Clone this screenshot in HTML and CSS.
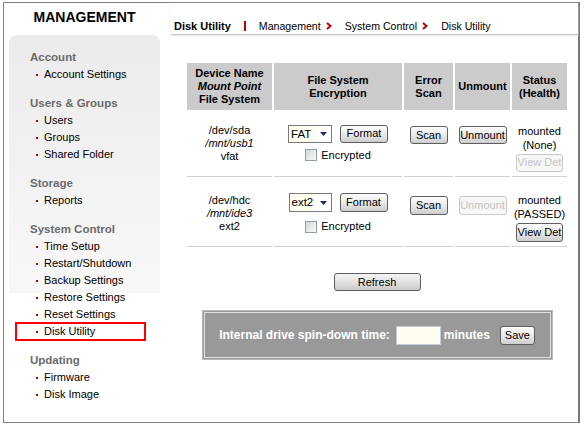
FILE: index.html
```html
<!DOCTYPE html>
<html>
<head>
<meta charset="utf-8">
<title>Disk Utility</title>
<link rel="stylesheet" href="styles.css">
</head>
<body>
<div class="frame">
  <aside class="sidebar">
    <h1 class="brand">MANAGEMENT</h1>
    <nav class="menu">
      <div class="group">
        <h2>Account</h2>
        <ul><li>Account Settings</li></ul>
      </div>
      <div class="group">
        <h2>Users &amp; Groups</h2>
        <ul><li>Users</li><li>Groups</li><li>Shared Folder</li></ul>
      </div>
      <div class="group">
        <h2>Storage</h2>
        <ul><li>Reports</li></ul>
      </div>
      <div class="group">
        <h2>System Control</h2>
        <ul>
          <li>Time Setup</li>
          <li>Restart/Shutdown</li>
          <li>Backup Settings</li>
          <li>Restore Settings</li>
          <li>Reset Settings</li>
          <li class="active">Disk Utility</li>
        </ul>
      </div>
      <div class="group">
        <h2>Updating</h2>
        <ul><li>Firmware</li><li>Disk Image</li></ul>
      </div>
    </nav>
  </aside>

  <main class="content">
    <div class="crumbs">
      <span class="page-title">Disk Utility</span>
      <span class="crumb-bar"></span>
      <span class="crumb">Management</span>
      <svg class="chev" width="6" height="8" viewBox="0 0 6 8"><polyline points="1,1 4.5,4 1,7" fill="none" stroke="#c00000" stroke-width="2"/></svg>
      <span class="crumb">System Control</span>
      <svg class="chev" width="6" height="8" viewBox="0 0 6 8"><polyline points="1,1 4.5,4 1,7" fill="none" stroke="#c00000" stroke-width="2"/></svg>
      <span class="crumb">Disk Utility</span>
    </div>

    <div class="body">
      <table class="disks">
        <colgroup>
          <col class="c-dev"><col class="c-fs"><col class="c-scan"><col class="c-unm"><col class="c-stat">
        </colgroup>
        <thead>
          <tr>
            <th>Device Name<br><em>Mount Point</em><br>File System</th>
            <th>File System<br>Encryption</th>
            <th>Error<br>Scan</th>
            <th>Unmount</th>
            <th>Status<br>(Health)</th>
          </tr>
        </thead>
        <tbody>
          <tr class="r1">
            <td class="dev">/dev/sda<br><em>/mnt/usb1</em><br>vfat</td>
            <td>
              <div class="fs-line">
                <span class="select"><span class="select-val">FAT</span><svg class="arrow" width="7" height="4" viewBox="0 0 7 4"><polygon points="0,0 7,0 3.5,4" fill="#1c2a6b"/></svg></span>
                <button class="btn w-format">Format</button>
              </div>
              <label class="enc-line"><span class="check"></span>Encrypted</label>
            </td>
            <td class="act"><button class="btn w-scan">Scan</button></td>
            <td class="act"><button class="btn w-unm">Unmount</button></td>
            <td class="stat">mounted<br>(None)<br><button class="btn w-view" disabled>View Det</button></td>
          </tr>
          <tr class="r2">
            <td class="dev">/dev/hdc<br><em>/mnt/ide3</em><br>ext2</td>
            <td>
              <div class="fs-line">
                <span class="select"><span class="select-val">ext2</span><svg class="arrow" width="7" height="4" viewBox="0 0 7 4"><polygon points="0,0 7,0 3.5,4" fill="#1c2a6b"/></svg></span>
                <button class="btn w-format">Format</button>
              </div>
              <label class="enc-line"><span class="check"></span>Encrypted</label>
            </td>
            <td class="act"><button class="btn w-scan">Scan</button></td>
            <td class="act"><button class="btn w-unm" disabled>Unmount</button></td>
            <td class="stat">mounted<br>(PASSED)<br><button class="btn w-view">View Det</button></td>
          </tr>
        </tbody>
      </table>

      <button class="btn refresh">Refresh</button>

      <div class="spin">
        <span class="spin-label">Internal drive spin-down time:</span>
        <span class="spin-input"></span>
        <span class="spin-unit">minutes</span>
        <button class="btn save">Save</button>
      </div>
    </div>
  </main>
</div>
</body>
</html>
```

FILE: styles.css
```css
* { box-sizing: border-box; }

body {
  margin: 0;
  background: #fff;
  color: #000;
  font-family: "Liberation Sans", Arial, sans-serif;
  font-size: 11px;
}

.frame {
  margin: 2px 0 0 3px;
  width: 577px;
  height: 421px;
  border: 1px solid #808080;
  border-right: 2px solid #777;
  display: flex;
}

/* ---------- sidebar ---------- */
.sidebar {
  width: 167px;
  flex: none;
}

.brand {
  margin: 0;
  height: 32px;
  padding: 5px 6px 0 0;
  font-size: 14px;
  line-height: 18px;
  font-weight: bold;
  text-align: center;
}

.menu {
  margin-left: 5px;
  width: 151px;
  height: 385px;
  padding-top: 14px;
  border-radius: 8px 8px 0 0;
  background: linear-gradient(#ebebeb, #f8f8f8) no-repeat;
  background-size: 100% 258px;
}

.group + .group { margin-top: 12px; }

.group h2 {
  margin: 0;
  padding-left: 21px;
  font-size: 11.5px;
  line-height: 17px;
  font-weight: bold;
  color: #6b6b6b;
}

.group ul {
  margin: 0;
  padding: 0;
  list-style: none;
}

.group li {
  display: flex;
  align-items: center;
  margin-left: 7px;
  width: 129px;
  height: 17px;
  line-height: 17px;
}

.group li::before {
  content: "";
  width: 2px;
  height: 2px;
  margin: 0 6px 0 20px;
  background: #c00000;
}

.group li.active {
  outline: 2px solid #ff0000;
  outline-offset: -1px;
}

/* ---------- main ---------- */
.content {
  flex: 1;
  min-width: 0;
}

.crumbs {
  height: 32px;
  padding: 14px 0 0 3px;
  display: flex;
  align-items: center;
  border-bottom: 1px solid #c6c6c6;
  box-shadow: 0 1px 2px #e6e6e6;
  line-height: 14px;
}

.page-title {
  font-size: 11px;
  font-weight: bold;
}

.crumb-bar {
  width: 2px;
  height: 10px;
  margin: 0 13px 0 13px;
  background: #c00000;
}

.crumb { font-size: 10.6px; }

.chev { margin: 0 13px 0 5px; }

.body {
  padding-left: 5px;
  display: flex;
  flex-direction: column;
  align-items: center;
}

/* ---------- table ---------- */
.disks {
  margin-top: 28px;
  width: 384px;
  table-layout: fixed;
  border-collapse: separate;
  border-spacing: 2px 0;
}

.c-dev { width: 85px; }
.c-fs { width: 128px; }
.c-scan { width: 49px; }
.c-unm { width: 55px; }
.c-stat { width: 55px; }

.disks th {
  background: #cbcbcb;
  padding: 4px 0;
  height: 47px;
  font-size: 11px;
  line-height: 13px;
  font-weight: bold;
  text-align: center;
  vertical-align: middle;
}

.disks td {
  padding: 0;
  border-bottom: 1px solid #d2d2d2;
  text-align: center;
  vertical-align: middle;
  line-height: 13px;
}

.r1 td { height: 67px; }
.r2 td { height: 70px; padding-top: 3px; }

.disks td.act { padding-bottom: 16px; }
.disks .r2 td.act { padding-bottom: 13px; padding-top: 0; }

.disks td.stat {
  padding-top: 9px;
  line-height: 14px;
}

.disks .r2 td.stat { padding-top: 11px; }

.fs-line {
  display: flex;
  justify-content: center;
  align-items: center;
  gap: 8px;
}

.select {
  display: inline-flex;
  align-items: stretch;
  width: 44px;
  height: 18px;
  border: 1px solid #7a7a7a;
  background: #fff;
}

.r2 .select { height: 19px; width: 43px; }

.select-val {
  flex: 1;
  background: #fffcf0;
  padding-left: 2px;
  text-align: left;
  font-size: 11.5px;
  line-height: 16px;
}

.arrow {
  align-self: center;
  margin: 1px 4px 0 4px;
}

.enc-line {
  display: flex;
  justify-content: center;
  align-items: center;
  gap: 4px;
  margin-top: 6px;
  line-height: 13px;
}

.r2 .enc-line { margin-top: 8px; }

.check {
  width: 12px;
  height: 12px;
  border: 1px solid #8c9fb5;
  background: linear-gradient(135deg, #d8d8d8, #fafafa);
}

/* ---------- buttons ---------- */
.btn {
  height: 18px;
  padding: 0;
  border: 1px solid #5e5e5e;
  border-radius: 3px;
  background: linear-gradient(#fdfdfd, #e8e8e8 55%, #cdcdcd);
  font-family: "Liberation Sans", Arial, sans-serif;
  font-size: 11px;
  line-height: 15px;
  color: #000;
  white-space: nowrap;
  overflow: hidden;
}

.r2 .btn { height: 19px; }

.btn[disabled] {
  color: #c4c4c4;
  border-color: #c8c8c8;
  background: #f7f7f7;
}

.w-format { width: 48px; }
.w-scan { width: 38px; }
.w-unm { width: 48px; }
.w-view { width: 47px; margin-top: 2px; }

.refresh {
  margin-top: 26px;
  width: 87px;
  height: 18px;
  background: linear-gradient(#f4f4f4, #e2e2e2 50%, #cacaca);
}

/* ---------- spin-down ---------- */
.spin {
  margin-top: 19px;
  width: 351px;
  height: 50px;
  display: flex;
  justify-content: center;
  align-items: center;
  background: #999;
  border: 1px solid #b8b8b8;
  box-shadow: inset 0 0 0 1px #999, inset 0 0 0 2px #e2e2e2;
  color: #fff;
  font-weight: bold;
  font-size: 12px;
}

.spin-input {
  width: 45px;
  height: 19px;
  margin-left: 6px;
  background: #fffcf2;
  border: 1px solid #c4ccd8;
}

.spin-unit { margin-left: 3px; }

.save {
  margin-left: 10px;
  width: 35px;
  height: 19px;
  font-size: 11px;
  font-weight: normal;
}
```
